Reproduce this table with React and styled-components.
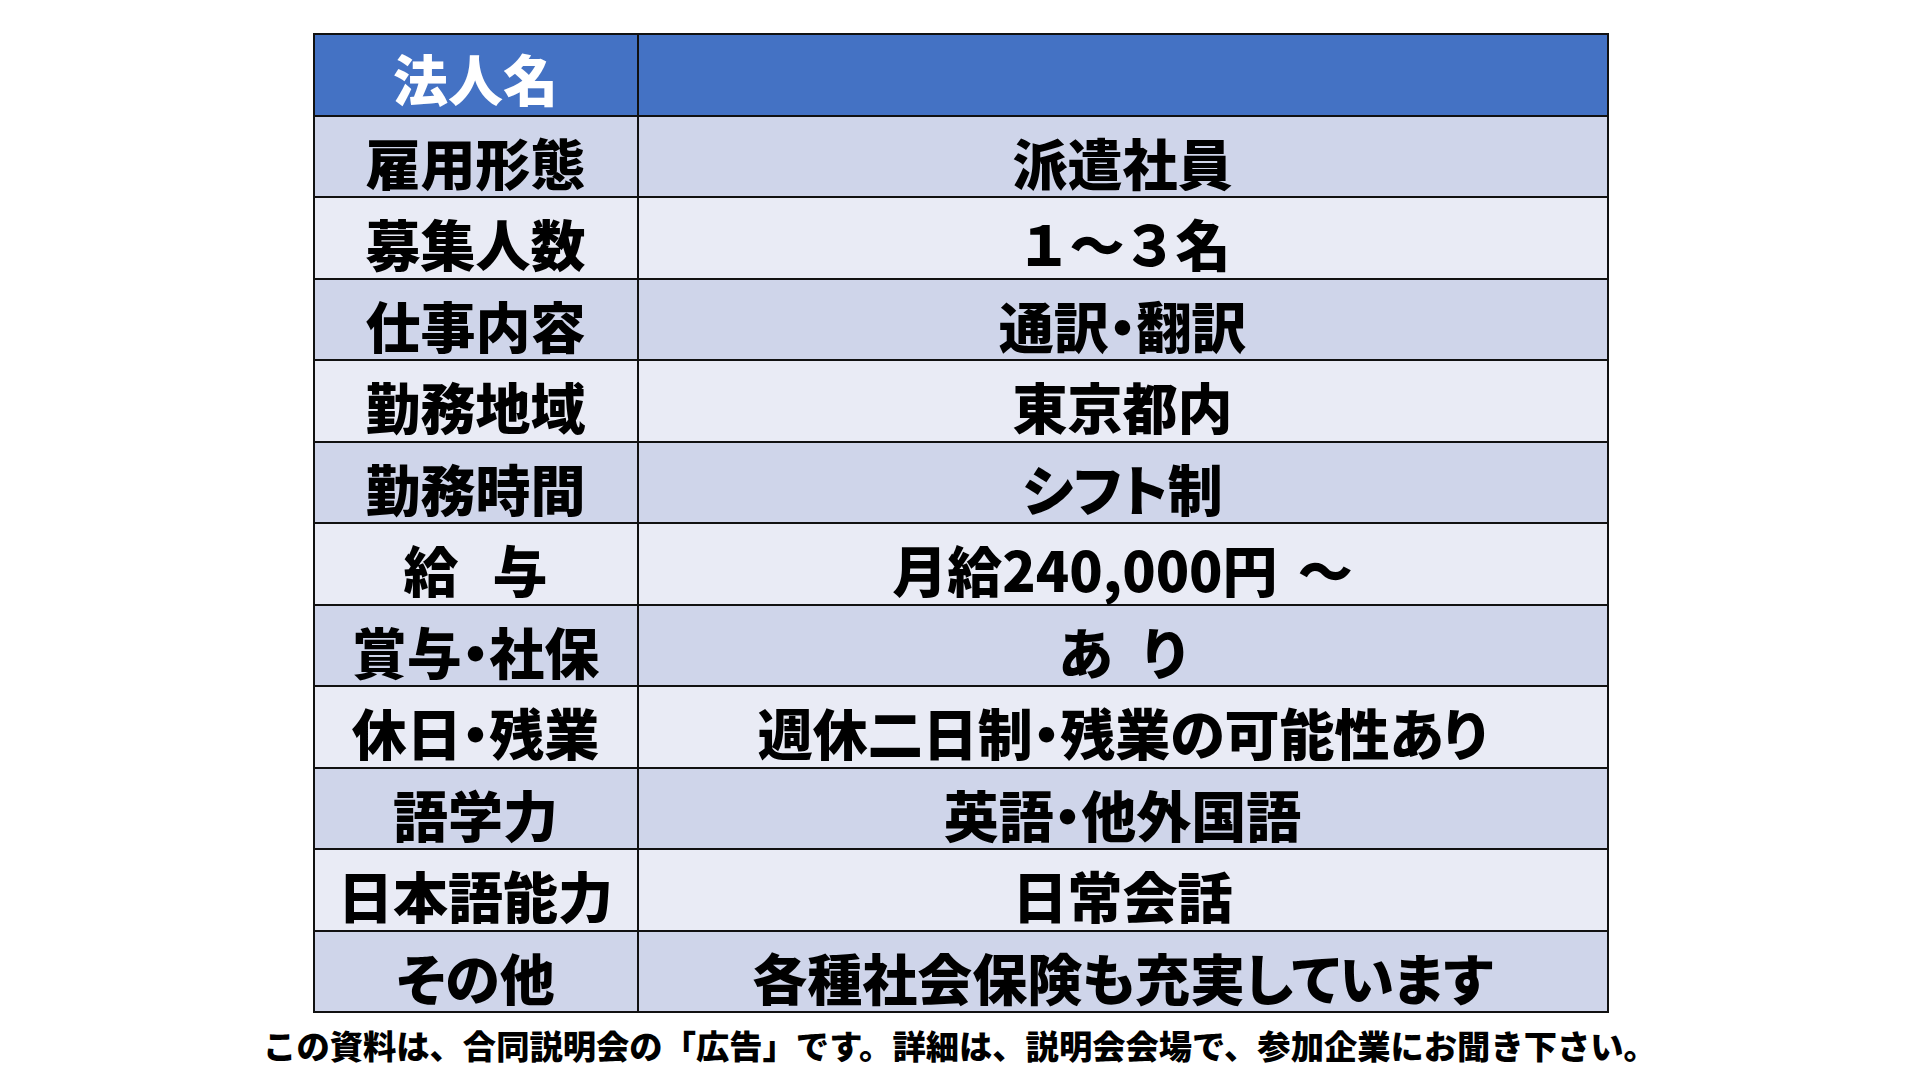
import React from "react";
import styled, { createGlobalStyle } from "styled-components";

const Global = createGlobalStyle`
  html, body { margin: 0; padding: 0; background: #ffffff; }
  body { font-family: "Noto Sans CJK JP", "Noto Sans", sans-serif; }
`;

const Page = styled.div`
  width: 1920px;
  height: 1080px;
  box-sizing: border-box;
  padding-top: 33px;
  display: flex;
  flex-direction: column;
  align-items: center;
  background: #ffffff;
`;

const Table = styled.div`
  width: 1296px;
  box-sizing: border-box;
  background: #111111;
  padding: 2px;
  display: flex;
  flex-direction: column;
  gap: 2px;
  margin-left: 1px;
`;

const Row = styled.div`
  display: grid;
  grid-template-columns: 322px 1fr;
  column-gap: 2px;
  height: 79.5px;
`;

const bg = { head: "#4472C4", odd: "#CFD5EA", even: "#E9EBF5" };

const Cell = styled.div`
  background: ${(p) => bg[p.$tone]};
  color: ${(p) => (p.$tone === "head" ? "#ffffff" : "#000000")};
  display: flex;
  align-items: center;
  justify-content: center;
  box-sizing: border-box;
  padding-top: ${(p) => (p.$tone === "head" ? 6 : 10)}px;
  font-family: "Noto Sans CJK JP", "Noto Sans", sans-serif;
  font-weight: 900;
  font-size: 55px;
  line-height: 1;
  white-space: nowrap;
  font-feature-settings: ${(p) => (p.$fixed ? "normal" : '"palt"')};
  letter-spacing: ${(p) => (p.$fixed ? "-2px" : "0")};
`;

const Spacer = styled.span`
  display: inline-block;
  width: ${(p) => p.$w}px;
`;

const Note = styled.p`
  margin: 12px 0 0 0;
  font-family: "Noto Sans CJK JP", "Noto Sans", sans-serif;
  font-weight: 900;
  font-size: 33.3px;
  line-height: 40px;
  color: #000000;
  white-space: nowrap;
`;

const rows = [
  { label: "雇用形態", value: "派遣社員" },
  { label: "募集人数", value: "１～３名", fixed: true },
  { label: "仕事内容", value: "通訳・翻訳" },
  { label: "勤務地域", value: "東京都内" },
  { label: "勤務時間", value: "シフト制" },
  { label: <>給<Spacer $w={34} />与</>, value: <>月給240,000円<Spacer $w={20} />～</> },
  { label: "賞与・社保", value: <>あ<Spacer $w={30} />り</> },
  { label: "休日・残業", value: "週休二日制・残業の可能性あり" },
  { label: "語学力", value: "英語・他外国語" },
  { label: "日本語能力", value: "日常会話" },
  { label: "その他", value: "各種社会保険も充実しています" },
];

export default function App() {
  return (
    <>
      <Global />
      <Page>
        <Table>
          <Row>
            <Cell $tone="head">法人名</Cell>
            <Cell $tone="head" />
          </Row>
          {rows.map((r, i) => {
            const tone = i % 2 === 0 ? "odd" : "even";
            return (
              <Row key={i}>
                <Cell $tone={tone}>{r.label}</Cell>
                <Cell $tone={tone} $fixed={r.fixed}>{r.value}</Cell>
              </Row>
            );
          })}
        </Table>
        <Note>この資料は、合同説明会の「広告」です。詳細は、説明会会場で、参加企業にお聞き下さい。</Note>
      </Page>
    </>
  );
}
